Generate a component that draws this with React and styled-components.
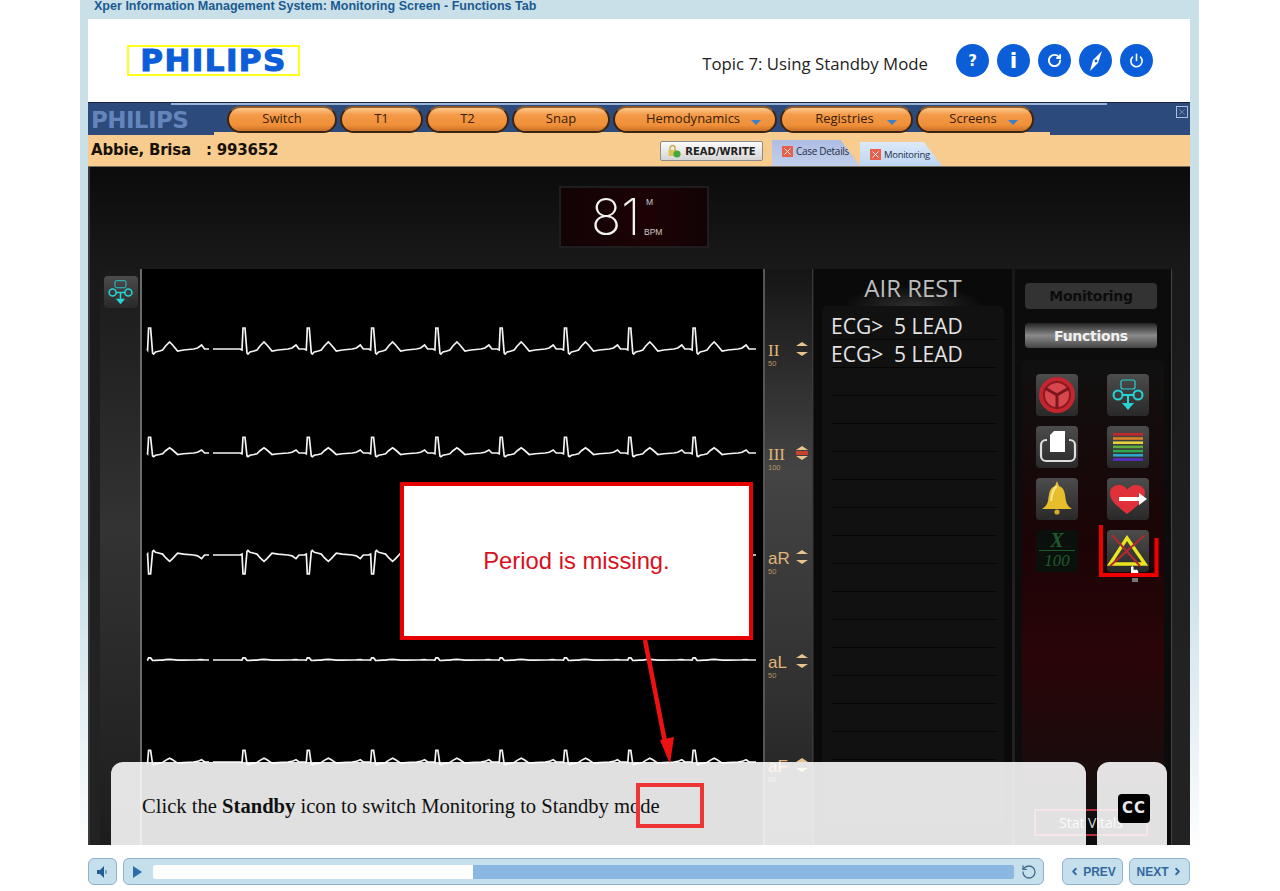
import React from "react";
import styled, { createGlobalStyle } from "styled-components";
import { ChevronLeft, ChevronRight, Power, RotateCcw, RotateCw, X } from "lucide-react";

const Global = createGlobalStyle`
  html, body {
    margin: 0;
    background: #fff;
    overflow: hidden;
  }
`;

const SANS = `"Liberation Sans", Arial, sans-serif`;
const UI = `"Open Sans", "Noto Sans", sans-serif`;

// ---- ecg trace ----

const BEAT = [
  [-9, 0], [-5, 0], [-3, 1], [-2, -21], [0, -21], [2, 4], [3, 5], [5, 3], [9, 2], [12, 1],
  [15, -3], [19, -7], [22, -4], [27, 2], [33, 1], [43, 0], [47, -1], [51, -4], [54, 0],
];

function trace(base, scale, from, to, peaks) {
  const pts = [[from, base]];
  peaks.forEach((peak) => {
    BEAT.forEach(([dx, dy]) => {
      const x = peak + dx;
      if (x > from && x < to) pts.push([x, base + dy * scale]);
    });
  });
  pts.push([to, base]);
  return pts.map((p) => p.join(",")).join(" ");
}

const LATER_PEAKS = Array.from({ length: 8 }, (_, i) => 245 + i * 64.3);
const ECG_ROWS = [
  { base: 349, scale: 1 },
  { base: 453, scale: 0.75 },
  { base: 555, scale: -0.9 },
  { base: 660, scale: 0.1 },
  { base: 762, scale: 0.55 },
];

function EcgTraces() {
  return (
    <svg width="621" height="576" viewBox="142 269 621 576">
      {ECG_ROWS.map((row) => (
        <g key={row.base} fill="none" stroke="#f4f4f4" strokeWidth="1.7">
          <polyline points={trace(row.base, row.scale, 147, 209, [150.6])} />
          <polyline points={trace(row.base, row.scale, 213, 756, LATER_PEAKS)} />
        </g>
      ))}
    </svg>
  );
}

// ---- page frame ----

const Shell = styled.div`
  box-sizing: border-box;
  width: 1119px;
  height: 891px;
  margin-left: 80px;
  padding: 0 9px 0 8px;
  background: linear-gradient(#c9e0e8 0, #c9e0e8 560px, #f4f9fb 800px, #fff 850px);
`;

const CourseTitle = styled.div`
  height: 19px;
  padding-left: 6px;
  font: bold 12.55px/12px ${SANS};
  color: #1b5a91;
`;

const Header = styled.header`
  display: flex;
  align-items: center;
  height: 83px;
  padding: 0 37px 0 39px;
  background: #fff;
`;

const Logo = styled.div`
  display: flex;
  align-items: center;
  justify-content: center;
  box-sizing: border-box;
  width: 173px;
  height: 31px;
  border: 2px solid #ffff1a;
  font: bold 31px/27px "DejaVu Sans", sans-serif;
  letter-spacing: 1.4px;
  -webkit-text-stroke: 1.1px #0b5ed7;
  color: #0b5ed7;
`;

const TopicTitle = styled.div`
  margin-left: auto;
  margin-right: 28px;
  padding-top: 6px;
  font: 16.8px ${UI};
  color: #222;
`;

const RoundButtons = styled.div`
  display: flex;
  gap: 8px;
`;

const RoundButton = styled.div`
  display: flex;
  align-items: center;
  justify-content: center;
  width: 33px;
  height: 33px;
  border-radius: 50%;
  background: #0b5ed7;
  color: #fff;
  font: bold ${(p) => p.$size || 15}px "DejaVu Sans", sans-serif;
`;

// ---- screen ----

const Screen = styled.main`
  position: relative;
  display: flex;
  flex-direction: column;
  height: 743px;
  overflow: hidden;
  background: #111;
`;

const Toolbar = styled.div`
  position: relative;
  display: flex;
  align-items: flex-start;
  flex: none;
  height: 33px;
  box-sizing: border-box;
  padding: 3px 0 0 3px;
  background: #2d4a7c;
  border-top: 1px solid #16233c;

  &::before {
    content: "";
    position: absolute;
    top: 0;
    left: 83px;
    width: 936px;
    height: 2px;
    background: #9cb4d8;
  }

  &::after {
    content: "";
    position: absolute;
    bottom: 0;
    left: 126px;
    width: 836px;
    height: 3px;
    background: #f7cc8e;
  }
`;

const ToolbarLogo = styled.div`
  width: 136px;
  margin-top: -1px;
  font: bold 23px/30px "DejaVu Sans", sans-serif;
  letter-spacing: -0.6px;
  color: #6485bb;
`;

const NavPills = styled.nav`
  position: relative;
  z-index: 1;
  display: flex;
  gap: 3px;
`;

const NavPill = styled.div`
  position: relative;
  box-sizing: border-box;
  width: ${(p) => p.$width}px;
  height: 27px;
  padding-right: ${(p) => (p.$menu ? 4 : 0)}px;
  border: 2px solid #3d2410;
  border-top-color: #8a5a2c;
  border-radius: 14px;
  background: linear-gradient(#fbc98c 0, #f49a48 30%, #ef9038 75%, #c9702a 100%);
  font: 13px/20px ${UI};
  color: #3a1c08;
  text-align: center;

  ${(p) =>
    p.$menu &&
    `&::after {
      content: "";
      position: absolute;
      right: 14px;
      top: 12px;
      border: 5px solid transparent;
      border-top: 5px solid #3f7fc8;
      border-bottom: 0;
    }`}
`;

const CloseBox = styled.div`
  position: absolute;
  top: 3px;
  right: 2px;
  display: flex;
  box-sizing: border-box;
  width: 12px;
  height: 12px;
  border: 1px solid #a9bcd8;
  color: #a9bcd8;
`;

const PatientBar = styled.div`
  display: flex;
  align-items: flex-end;
  flex: none;
  height: 32px;
  box-sizing: border-box;
  padding: 0 248px 0 3px;
  background: #f7cc8e;
  border-bottom: 1px solid #77705f;
`;

const PatientName = styled.div`
  align-self: center;
  margin-top: -2px;
  font: bold 15px "DejaVu Sans", sans-serif;
  letter-spacing: -0.2px;
  white-space: pre;
  color: #17110a;
`;

const ReadWrite = styled.div`
  display: flex;
  align-items: center;
  justify-content: center;
  gap: 4px;
  box-sizing: border-box;
  width: 103px;
  height: 20px;
  margin: 0 9px 5px auto;
  border: 1px solid #8c8c8c;
  border-radius: 2px;
  background: linear-gradient(#fafafa, #d6d6d6);
  font: bold 10px "DejaVu Sans", sans-serif;
  color: #222;
`;

const Tab = styled.div`
  display: flex;
  align-items: center;
  gap: 3px;
  box-sizing: border-box;
  width: ${(p) => p.$width}px;
  height: ${(p) => (p.$active ? 24 : 26)}px;
  padding: 0 0 ${(p) => (p.$active ? 0 : 4)}px 10px;
  clip-path: polygon(0 0, 78% 0, 100% 100%, 0 100%);
  background: ${(p) =>
    p.$active ? "linear-gradient(#dce9f8, #bcd5f3)" : "linear-gradient(#aebde3, #c2cfec)"};
  font: ${(p) => (p.$active ? 9.5 : 10)}px ${UI};
  letter-spacing: -0.3px;
  color: #25304a;
`;

const TabClose = styled.span`
  display: flex;
  width: 11px;
  height: 11px;
  background: #e8604c;
  color: #fff;
`;

// ---- monitor ----

const Monitor = styled.div`
  display: flex;
  flex-direction: column;
  flex: 1;
  box-sizing: border-box;
  min-height: 0;
  padding: 19px 0 0 10px;
  border-left: 2px solid #3a3a3a;
  background: linear-gradient(#0b0b0b, #191919 100px, #222 500px);
`;

const RateDisplay = styled.div`
  position: relative;
  flex: none;
  box-sizing: border-box;
  width: 150px;
  height: 62px;
  margin-left: 459px;
  padding: 2px 0 0 30px;
  background: linear-gradient(90deg, #120305, #1d0205 60%, #120305);
  border: 2px solid #1e1e1e;
  color: #f2f2f2;
`;

const RateValue = styled.div`
  width: 50px;
  font: 200 50px/54px Inter, sans-serif;
`;

const RateUnit = styled.span`
  position: absolute;
  left: ${(p) => p.$left}px;
  top: ${(p) => p.$top}px;
  font: 8.5px ${SANS};
  color: #ccc;
`;

const MainRow = styled.div`
  display: flex;
  flex: none;
  height: 576px;
  margin-top: 21px;
`;

const LeftStrip = styled.div`
  flex: none;
  box-sizing: border-box;
  width: 42px;
  padding: 7px 4px;
  background: linear-gradient(#1a1a1a, #333 45%, #1d1d1d);
  border-right: 2px solid #6a6a6a;
`;

const Graph = styled.div`
  flex: none;
  width: 621px;
  background: #000;
`;

const LeadColumn = styled.div`
  flex: none;
  box-sizing: border-box;
  width: 50px;
  padding: 28px 3px 0 3px;
  border-left: 2px solid #555;
  border-right: 1px solid #3a3a3a;
  background: linear-gradient(#151515, #444 35%, #303030 75%, #1e1e1e);
`;

const Lead = styled.div`
  display: flex;
  align-items: center;
  justify-content: space-between;
  height: 104px;
`;

const LeadLabel = styled.div`
  margin-top: 13px;
`;

const LeadName = styled.div`
  font: 17px/16px ${(p) => (p.$serif ? `"Liberation Serif", serif` : SANS)};
  color: #e0b47a;
`;

const LeadGain = styled.div`
  margin-top: 1px;
  font: 7.5px/8px ${SANS};
  color: #b89564;
`;

const LeadArrows = styled.div`
  display: flex;
  flex-direction: column;
  gap: ${(p) => (p.$alarm ? 1 : 6)}px;
  margin-right: 1px;
`;

const LeadArrow = styled.span`
  width: 0;
  height: 0;
  border: 6px solid transparent;
  border-width: ${(p) => (p.$down ? "4px 6px 0" : "0 6px 4px")};
  border-color: ${(p) =>
    p.$down ? "#e8c48c transparent transparent" : "transparent transparent #e8c48c"};
`;

const AlarmDot = styled.span`
  width: 12px;
  height: 4px;
  background: #c9402c;
`;

const ProtocolPanel = styled.section`
  flex: none;
  box-sizing: border-box;
  width: 198px;
  margin-left: 1px;
  padding: 0 8px;
  background: radial-gradient(ellipse 70px 22px at 50% 38px, #303030, transparent), #0a0a0a;
`;

const ProtocolTitle = styled.div`
  height: 37px;
  font: 24px/38px ${UI};
  color: #bdbdbd;
  text-align: center;
`;

const ProtocolList = styled.div`
  box-sizing: border-box;
  height: 520px;
  padding: 6px 8px 0 9px;
  border-radius: 5px;
  background: #111;
`;

const ProtocolRow = styled.div`
  height: 28px;
  border-bottom: 1px solid #050505;
  font: 21px/28px ${UI};
  white-space: pre;
  color: #e4e4e4;
  box-sizing: border-box;
`;

const FunctionPanel = styled.section`
  flex: none;
  box-sizing: border-box;
  width: 157px;
  margin-left: 3px;
  padding: 14px 7px 0;
  background: #0c0c0c;
  border-right: 1px solid #444;
`;

const SideTab = styled.div`
  box-sizing: border-box;
  width: 132px;
  height: ${(p) => (p.$active ? 25 : 26)}px;
  margin: 0 0 14px 3px;
  border-radius: 4px;
  background: ${(p) =>
    p.$active ? "linear-gradient(#222, #8a8a8a 50%, #444)" : "#333"};
  font: bold 14px/26px "DejaVu Sans", sans-serif;
  letter-spacing: -0.3px;
  color: ${(p) => (p.$active ? "#f0f0f0" : "#0c0c0c")};
  text-align: center;
`;

const FunctionBox = styled.div`
  box-sizing: border-box;
  height: 460px;
  margin-top: -2px;
  padding: 14px 15px 0 14px;
  border-radius: 6px;
  background: linear-gradient(#101010, #1c0406 40%, #2a0508 65%, #120f0f);
`;

const FunctionGrid = styled.div`
  display: grid;
  grid-template-columns: 42px 42px;
  justify-content: space-between;
  grid-auto-rows: 42px;
  gap: 10px 29px;
`;

const Tile = styled.div`
  position: relative;
  width: 42px;
  height: 42px;
  border-radius: 4px;
  background: ${(p) => (p.$dim ? "#0a110c" : "linear-gradient(#4c4c4c, #292929)")};
`;

const SmallTile = styled(Tile)`
  width: 34px;
  height: 32px;
`;

const DimScore = styled.div`
  display: flex;
  flex-direction: column;
  align-items: center;
  font: italic bold 20px/20px "Liberation Serif", serif;
  color: #1e5a2c;
`;

const DimDenominator = styled.span`
  width: 36px;
  border-top: 1px solid #1e5a2c;
  font: italic 17px/19px "Liberation Serif", serif;
  text-align: center;
`;

const StatVitals = styled.div`
  box-sizing: border-box;
  width: 114px;
  height: 27px;
  margin: 237px 0 0 -2px;
  border: 2px solid #b5303a;
  font: 14px/23px ${UI};
  color: #ddd;
  text-align: center;
`;

const StandbyHolder = styled.div`
  position: absolute;
  left: -8px;
  top: -6px;
`;

// ---- things lying over the monitor ----

const Callout = styled.div`
  position: absolute;
  left: 312px;
  top: 380px;
  display: flex;
  align-items: center;
  justify-content: center;
  box-sizing: border-box;
  width: 353px;
  height: 158px;
  border: 4px solid #e60000;
  background: #fff;
  font: 23.8px ${SANS};
  color: #d81020;
`;

const CalloutArrow = styled.svg`
  position: absolute;
  left: 540px;
  top: 530px;
`;

const CaptionPanel = styled.div`
  position: absolute;
  left: ${(p) => p.$left}px;
  top: 660px;
  display: flex;
  align-items: center;
  box-sizing: border-box;
  width: ${(p) => p.$width}px;
  height: 83px;
  border-radius: 12px 12px 0 0;
  background: rgba(255, 255, 255, 0.88);
`;

const CaptionText = styled.div`
  padding: 5px 0 0 31px;
  font: 20.6px "Liberation Serif", serif;
  color: #111;
`;

const ErrorMark = styled.div`
  position: absolute;
  left: 525px;
  top: 21px;
  box-sizing: border-box;
  width: 68px;
  height: 45px;
  border: 4px solid #ee3535;
`;

const CcBadge = styled.div`
  width: 32px;
  height: 29px;
  margin: 9px 0 0 21px;
  border-radius: 4px;
  background: #000;
  font: bold 15px/29px "DejaVu Sans", sans-serif;
  letter-spacing: 1px;
  color: #e8e8e8;
  text-align: center;
`;

// ---- player footer ----

const Footer = styled.footer`
  display: flex;
  height: 27px;
  margin-top: 13px;
`;

const PlayerBox = styled.div`
  display: flex;
  align-items: center;
  box-sizing: border-box;
  flex: none;
  width: ${(p) => p.$width}px;
  height: 27px;
  margin-left: ${(p) => p.$gap || 0}px;
  justify-content: ${(p) => p.$justify || "flex-start"};
  gap: ${(p) => (p.$justify ? 3 : 0)}px;
  border: 1px solid #8db2cf;
  border-radius: 6px;
  background: #c6dfec;
  font: bold 12px ${SANS};
  color: #33699e;
`;

const PlayMark = styled.span`
  flex: none;
  width: 0;
  height: 0;
  margin: 0 ${(p) => p.$after}px 0 ${(p) => p.$before}px;
  border-left: 9px solid #2a6da8;
  border-top: 6px solid transparent;
  border-bottom: 6px solid transparent;
`;

const Track = styled.div`
  flex: none;
  width: 861px;
  height: 14px;
  border-radius: 2px;
  background: #8ab8e2;
  overflow: hidden;
`;

const Played = styled.div`
  height: 100%;
  background: #fff;
`;

const ReloadSlot = styled.div`
  display: flex;
  justify-content: center;
  flex: 1;
  color: #456d8a;
`;

// ---- drawings ----

const FlowIcon = ({ size = 42 }) => (
  <svg width={size} height={size} viewBox="0 0 42 42" fill="none" stroke="#27d3d3" strokeWidth="2">
    <rect x="14" y="6" width="14" height="9" rx="2" strokeWidth="1.2" />
    <circle cx="11" cy="21" r="4.5" />
    <circle cx="31" cy="21" r="4.5" />
    <path d="M15 21h12M21 21v9" />
    <path d="M15 29h12l-6 7z" fill="#27d3d3" stroke="none" />
  </svg>
);

const WheelIcon = () => (
  <svg width="42" height="42" viewBox="0 0 42 42">
    <circle cx="21" cy="21" r="18" fill="#c5252f" />
    <circle cx="21" cy="21" r="13" fill="#d9474e" stroke="#8c1a20" strokeWidth="2" />
    <path d="M21 21L9 14M21 21L33 14M21 21V35" stroke="#7c161c" strokeWidth="3" />
  </svg>
);

const TrayIcon = () => (
  <svg width="42" height="42" viewBox="0 0 42 42">
    <rect x="5" y="14" width="34" height="21" rx="5" fill="none" stroke="#ddd" strokeWidth="2.2" />
    <rect x="11" y="11" width="22" height="6" fill="#3e3e3e" />
    <path d="M18 5h11v21H14V9z" fill="#fff" />
  </svg>
);

const RAINBOW = ["#c3272d", "#d9822b", "#e5d33a", "#5eae3f", "#2fa84f", "#2ba6c9", "#5a2ec9"];

const RainbowIcon = () => (
  <svg width="42" height="42" viewBox="0 0 42 42">
    {RAINBOW.map((color, i) => (
      <rect key={color} x="6" y={7 + i * 4.2} width="30" height="2.6" fill={color} />
    ))}
  </svg>
);

const BellIcon = () => (
  <svg width="42" height="42" viewBox="0 0 42 42">
    <path d="M21 3l2 5c6 2 6 9 7 15 1 4 3 6 6 8H6c3-2 5-4 6-8 1-6 1-13 7-15z" fill="#e8bd2c" />
    <path d="M21 8c-4 2-5 8-6 15" stroke="#f8e68c" strokeWidth="2" fill="none" />
    <circle cx="21" cy="34" r="2.6" fill="#d9a92a" />
  </svg>
);

const HeartIcon = () => (
  <svg width="42" height="42" viewBox="0 0 42 42">
    <path d="M20 36C10 28 3 23 3 15c0-5 4-8 9-8 4 0 7 2 8 5 2-3 5-5 9-5 5 0 9 3 9 8 0 8-8 13-18 21z" fill="#e0303a" />
    <path d="M12 19h20v-4l8 6-8 6v-4H12z" fill="#fff" />
  </svg>
);

const StandbyIcon = () => (
  <svg width="60" height="58" viewBox="0 0 60 58" fill="none">
    <path d="M28 14L46 40H11z" stroke="#e9e61f" strokeWidth="3.4" />
    <path d="M11 42L46 11M13 11L41 42" stroke="#b5282e" strokeWidth="2" />
    <path d="M2 1V51H57.5V14" stroke="#ee0000" strokeWidth="4" />
    <path d="M32 49v-6l1.5-1 1 1v3l1-.5 1 .5 1-.5 1 .5 1 3z" fill="#fff" />
    <rect x="33" y="54" width="6" height="4" fill="#777" />
  </svg>
);

const CompassIcon = () => (
  <svg width="20" height="22" viewBox="0 0 20 22">
    <path d="M16 1L12 13 4 21l3-11z" fill="#fff" />
    <circle cx="10" cy="11" r="1.4" fill="#0b5ed7" />
  </svg>
);

const LockIcon = () => (
  <svg width="14" height="14" viewBox="0 0 14 14">
    <path d="M3 6V4a2.5 2.5 0 0 1 5 0v2" fill="none" stroke="#c9a84c" strokeWidth="1.4" />
    <rect x="1.5" y="6" width="8" height="6" fill="#e0c25a" />
    <circle cx="10" cy="10" r="3.6" fill="#46a83c" />
  </svg>
);

const SpeakerIcon = () => (
  <svg width="14" height="14" viewBox="0 0 14 14">
    <path d="M1 5h3l4-4v12L4 9H1z" fill="#1f5e96" />
    <path d="M10 5v4" stroke="#7ea6c6" strokeWidth="2" />
  </svg>
);

// ---- data ----

const PILLS = [
  { label: "Switch", width: 110 },
  { label: "T1", width: 83 },
  { label: "T2", width: 83 },
  { label: "Snap", width: 98 },
  { label: "Hemodynamics", width: 164, menu: true },
  { label: "Registries", width: 133, menu: true },
  { label: "Screens", width: 118, menu: true },
];

const LEADS = [
  { name: "II", gain: "50", serif: true },
  { name: "III", gain: "100", serif: true, alarm: true },
  { name: "aR", gain: "50" },
  { name: "aL", gain: "50" },
  { name: "aF", gain: "50" },
];

const PROTOCOL_ROWS = ["ECG>  5 LEAD", "ECG>  5 LEAD", ...Array(16).fill("")];
const PROGRESS = 320 / 861;

export default function App() {
  return (
    <>
      <Global />
      <Shell>
        <CourseTitle>Xper Information Management System: Monitoring Screen - Functions Tab</CourseTitle>

        <Header>
          <Logo>PHILIPS</Logo>
          <TopicTitle>Topic 7: Using Standby Mode</TopicTitle>
          <RoundButtons>
            <RoundButton>?</RoundButton>
            <RoundButton $size={22}>i</RoundButton>
            <RoundButton><RotateCw size={15} strokeWidth={3} /></RoundButton>
            <RoundButton><CompassIcon /></RoundButton>
            <RoundButton><Power size={15} strokeWidth={2.5} /></RoundButton>
          </RoundButtons>
        </Header>

        <Screen>
          <Toolbar>
            <ToolbarLogo>PHILIPS</ToolbarLogo>
            <NavPills>
              {PILLS.map((pill) => (
                <NavPill key={pill.label} $width={pill.width} $menu={pill.menu}>
                  {pill.label}
                </NavPill>
              ))}
            </NavPills>
            <CloseBox><X size={10} strokeWidth={1.2} /></CloseBox>
          </Toolbar>

          <PatientBar>
            <PatientName>Abbie, Brisa   : 993652</PatientName>
            <ReadWrite><LockIcon />READ/WRITE</ReadWrite>
            <Tab $width={88}><TabClose><X size={11} strokeWidth={2} /></TabClose>Case Details</Tab>
            <Tab $width={82} $active><TabClose><X size={11} strokeWidth={2} /></TabClose>Monitoring</Tab>
          </PatientBar>

          <Monitor>
            <RateDisplay>
              <RateValue>81</RateValue>
              <RateUnit $left={85} $top={9}>M</RateUnit>
              <RateUnit $left={83} $top={39}>BPM</RateUnit>
            </RateDisplay>

            <MainRow>
              <LeftStrip>
                <SmallTile><FlowIcon size={33} /></SmallTile>
              </LeftStrip>

              <Graph><EcgTraces /></Graph>

              <LeadColumn>
                {LEADS.map((lead) => (
                  <Lead key={lead.name}>
                    <LeadLabel>
                      <LeadName $serif={lead.serif}>{lead.name}</LeadName>
                      <LeadGain>{lead.gain}</LeadGain>
                    </LeadLabel>
                    <LeadArrows $alarm={lead.alarm}>
                      <LeadArrow />
                      {lead.alarm && <AlarmDot />}
                      <LeadArrow $down />
                    </LeadArrows>
                  </Lead>
                ))}
              </LeadColumn>

              <ProtocolPanel>
                <ProtocolTitle>AIR REST</ProtocolTitle>
                <ProtocolList>
                  {PROTOCOL_ROWS.map((row, i) => (
                    <ProtocolRow key={i}>{row}</ProtocolRow>
                  ))}
                </ProtocolList>
              </ProtocolPanel>

              <FunctionPanel>
                <SideTab>Monitoring</SideTab>
                <SideTab $active>Functions</SideTab>
                <FunctionBox>
                  <FunctionGrid>
                    <Tile><WheelIcon /></Tile>
                    <Tile><FlowIcon /></Tile>
                    <Tile><TrayIcon /></Tile>
                    <Tile><RainbowIcon /></Tile>
                    <Tile><BellIcon /></Tile>
                    <Tile><HeartIcon /></Tile>
                    <Tile $dim>
                      <DimScore>X<DimDenominator>100</DimDenominator></DimScore>
                    </Tile>
                    <Tile><StandbyHolder><StandbyIcon /></StandbyHolder></Tile>
                  </FunctionGrid>
                  <StatVitals>Stat Vitals</StatVitals>
                </FunctionBox>
              </FunctionPanel>
            </MainRow>
          </Monitor>

          <Callout>Period is missing.</Callout>
          <CalloutArrow width="60" height="135" viewBox="0 0 60 135">
            <path d="M17 8L37 110" stroke="#ee1111" strokeWidth="4.5" />
            <path d="M32 108l14-3-4 27z" fill="#ee1111" />
          </CalloutArrow>

          <CaptionPanel $left={23} $width={975}>
            <CaptionText>
              Click the <b>Standby</b> icon to switch Monitoring to Standby mode
            </CaptionText>
            <ErrorMark />
          </CaptionPanel>
          <CaptionPanel $left={1009} $width={70}>
            <CcBadge>CC</CcBadge>
          </CaptionPanel>
        </Screen>

        <Footer>
          <PlayerBox $width={29} $justify="center"><SpeakerIcon /></PlayerBox>
          <PlayerBox $width={921} $gap={6}>
            <PlayMark $before={9} $after={11} />
            <Track>
              <Played style={{ width: `${PROGRESS * 100}%` }} />
            </Track>
            <ReloadSlot><RotateCcw size={16} strokeWidth={2} /></ReloadSlot>
          </PlayerBox>
          <PlayerBox $width={61} $gap={18} $justify="center">
            <ChevronLeft size={11} strokeWidth={4} />PREV
          </PlayerBox>
          <PlayerBox $width={61} $gap={6} $justify="center">
            NEXT<ChevronRight size={11} strokeWidth={4} />
          </PlayerBox>
        </Footer>
      </Shell>
    </>
  );
}
